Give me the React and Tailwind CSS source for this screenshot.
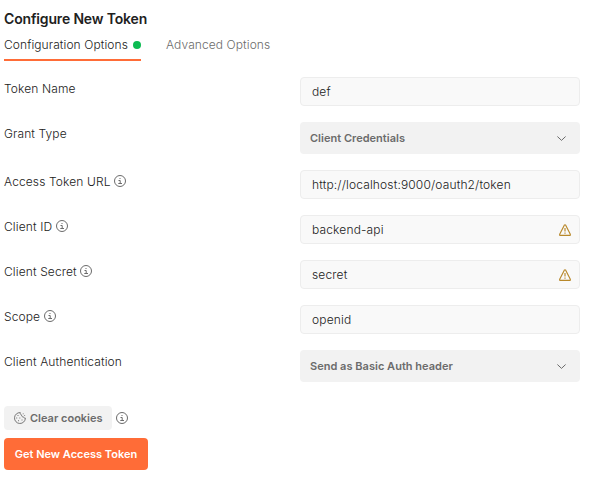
function InfoIcon() {
  return (
    <svg className="size-3 shrink-0" viewBox="0 0 12 12" fill="none" stroke="#6b6b6b">
      <circle cx="6" cy="6" r="5.5" />
      <path d="M4.5 5.5H6.2V8.5M4.3 8.5H8M5.5 3.5H6.5" />
    </svg>
  );
}

function WarningIcon() {
  return (
    <svg className="size-3 shrink-0" viewBox="0 0 12 12" fill="none" stroke="#b8882a" strokeWidth="1.15" strokeLinejoin="round">
      <path d="M5.3 1.2Q6 .2 6.7 1.2L11.3 10.3Q11.5 11.4 10.7 11.4H1.3Q.5 11.4.7 10.3Z" />
      <path d="M6 4V7.5M6 8.4V9.7" />
    </svg>
  );
}

function ChevronIcon() {
  return (
    <svg className="h-[5px] w-[9px] shrink-0" viewBox="0 0 9 5" fill="none" stroke="#6b6b6b">
      <path d="M.4 .5L4.5 4.4L8.6 .5" />
    </svg>
  );
}

function CookieIcon() {
  return (
    <svg className="size-3 shrink-0" viewBox="0 0 12 12" fill="none" stroke="#6b6b6b" strokeWidth=".9">
      <path d="M6.3.6A5.45 5.45 0 1 0 11.4 6.1C10.4 6.3 9.7 5.7 9.5 4.9C8.2 5 7.4 4.2 7.6 3C6.6 2.8 6 1.7 6.3.6Z" />
      <path d="M3.5 3.5h1M2.2 6h1M5.3 6h1M4 8.7h1M7.5 8h1M8.8 1.8h.8M10.3 3.5h.8" />
    </svg>
  );
}

const fields = [
  { label: "Token Name", value: "def" },
  { label: "Grant Type", value: "Client Credentials", select: true },
  { label: "Access Token URL", value: "http://localhost:9000/oauth2/token", info: true },
  { label: "Client ID", value: "backend-api", info: true, warning: true },
  { label: "Client Secret", value: "secret", info: true, warning: true },
  { label: "Scope", value: "openid", info: true },
  { label: "Client Authentication", value: "Send as Basic Auth header", select: true },
];

function Field({ label, value, info, warning, select }) {
  return (
    <div className="flex items-start">
      <div className="flex h-6 w-[296px] items-center gap-[3.5px]">
        <span className="tracking-[0.12px]">{label}</span>
        {info && (
          <span className="pb-0.5">
            <InfoIcon />
          </span>
        )}
      </div>
      {select ? (
        <button className="flex h-8 w-[280px] items-center justify-between rounded bg-[#f2f2f2] pr-[14px] pl-[10px] text-[11px] font-semibold tracking-[0.02px] text-[#6b6b6b]">
          {value}
          <ChevronIcon />
        </button>
      ) : (
        <div className="flex h-[29px] w-[280px] items-center justify-between rounded border border-[#ededed] bg-[#f9f9f9] pr-2 pl-[11px]">
          <span className="tracking-[0.15px]">{value}</span>
          {warning && <WarningIcon />}
        </div>
      )}
    </div>
  );
}

export default function App() {
  return (
    <main className="h-[503px] w-[603px] bg-white pt-[9px] pl-1 font-['Inter',sans-serif] text-xs font-[350] text-[#212121]">
      <h1 className="text-sm leading-5 font-semibold tracking-[-0.16px]">Configure New Token</h1>
      <div className="flex items-start gap-[25px] leading-4 tracking-[0.09px]">
        <div className="flex h-8 w-[137px] items-center justify-between border-b-2 border-[#ff6c37] pt-0.5">
          Configuration Options
          <span className="size-2 rounded-full bg-[#0cbb52]" />
        </div>
        <div className="flex h-[30px] items-center pt-0.5 text-[#6b6b6b]">Advanced Options</div>
      </div>
      <div className="mt-4 flex flex-col gap-4">
        {fields.map((field) => (
          <Field key={field.label} {...field} />
        ))}
      </div>
      <div className="mt-6 flex items-center gap-1">
        <button className="flex h-6 w-[108px] items-center gap-1 rounded bg-[#f2f2f2] pl-[10px] text-[11px] font-semibold text-[#6b6b6b]">
          <CookieIcon />
          Clear cookies
        </button>
        <InfoIcon />
      </div>
      <button className="mt-2 h-8 w-36 rounded bg-[#ff6c37] text-[11px] font-semibold text-white">
        Get New Access Token
      </button>
    </main>
  );
}
